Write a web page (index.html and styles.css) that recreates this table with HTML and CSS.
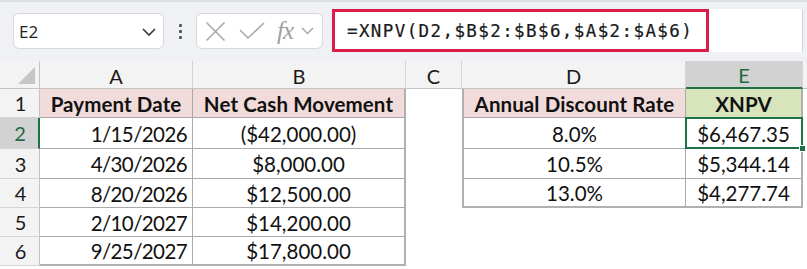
FILE: index.html
```html
<!DOCTYPE html>
<html>
<head>
<meta charset="utf-8">
<link rel="stylesheet" href="styles.css">
</head>
<body>
<div class="app">
  <div class="fbar">
    <div class="namebox">
      <span class="name">E2</span>
      <svg class="chev" width="14" height="8" viewBox="0 0 14 8"><polyline points="1,1 7,7 13,1" fill="none" stroke="#333" stroke-width="1.6"/></svg>
    </div>
    <div class="dots"><i></i><i></i><i></i></div>
    <div class="fxbox">
      <svg width="21" height="21" viewBox="0 0 21 21"><path d="M1.5 1.5 L19.5 19.5 M19.5 1.5 L1.5 19.5" stroke="#a8a8a8" stroke-width="1.6" fill="none"/></svg>
      <svg width="26" height="18" viewBox="0 0 26 18"><polyline points="1,8 9,16 25,1" stroke="#a8a8a8" stroke-width="1.6" fill="none"/></svg>
      <span class="fx">fx</span>
      <svg width="13" height="8" viewBox="0 0 13 8"><polyline points="1,1 6.5,6.5 12,1" fill="none" stroke="#a8a8a8" stroke-width="1.5"/></svg>
    </div>
    <div class="finput">
      <span class="ftext">=XNPV(D2,$B$2:$B$6,$A$2:$A$6)</span>
      <div class="hl"></div>
    </div>
  </div>
  <div class="grid">
    <div class="ch corner"><span class="tri"></span></div>
    <div class="ch">A</div>
    <div class="ch">B</div>
    <div class="ch">C</div>
    <div class="ch">D</div>
    <div class="ch sel">E</div>
    <div class="ch last"></div>

    <div class="rh">1</div>
    <div class="c t hd pink">Payment Date</div>
    <div class="c t hd pink tr">Net Cash Movement</div>
    <div class="c"></div>
    <div class="c t hd pink tl">Annual Discount Rate</div>
    <div class="c t hd green tr">XNPV</div>
    <div class="c"></div>

    <div class="rh rsel">2</div>
    <div class="c t r">1/15/2026</div>
    <div class="c t tr">($42,000.00)</div>
    <div class="c"></div>
    <div class="c t tl">8.0%</div>
    <div class="c t tr active">$6,467.35<span class="handle"></span></div>
    <div class="c"></div>

    <div class="rh">3</div>
    <div class="c t r">4/30/2026</div>
    <div class="c t tr">$8,000.00</div>
    <div class="c"></div>
    <div class="c t tl">10.5%</div>
    <div class="c t tr">$5,344.14</div>
    <div class="c"></div>

    <div class="rh">4</div>
    <div class="c t r">8/20/2026</div>
    <div class="c t tr">$12,500.00</div>
    <div class="c"></div>
    <div class="c t tl tb">13.0%</div>
    <div class="c t tr tb">$4,277.74</div>
    <div class="c"></div>

    <div class="rh">5</div>
    <div class="c t r">2/10/2027</div>
    <div class="c t tr">$14,200.00</div>
    <div class="c"></div>
    <div class="c"></div>
    <div class="c"></div>
    <div class="c"></div>

    <div class="rh">6</div>
    <div class="c t r tb">9/25/2027</div>
    <div class="c t tr tb">$17,800.00</div>
    <div class="c"></div>
    <div class="c"></div>
    <div class="c"></div>
    <div class="c"></div>
  </div>
</div>
</body>
</html>
```
FILE: styles.css
```css
* { box-sizing: border-box; }
html, body { margin: 0; padding: 0; background: #fff; }
body { width: 807px; height: 269px; overflow: hidden; font-family: "Lato", "Liberation Sans", sans-serif; color: #111; }

.fbar {
  height: 61px;
  background: #eff1f4;
  border-top: 2px solid #dcdee2;
  display: flex;
  align-items: flex-start;
}
.namebox {
  margin: 11px 0 0 13px;
  width: 151px; height: 36px;
  background: #fff;
  border: 1px solid #d6d8dc;
  border-radius: 6px;
  display: flex; align-items: center; justify-content: space-between;
  padding: 0 7px 0 5px;
}
.name { font-family: "Open Sans", "Liberation Sans", sans-serif; font-size: 17px; color: #222; }
.chev { margin-top: 2px; }
.dots { width: 32px; height: 36px; margin-top: 11px; display: flex; flex-direction: column; align-items: center; justify-content: center; gap: 3px; }
.dots i { display: block; width: 3px; height: 3px; background: #555; border-radius: 1px; }
.fxbox {
  margin-top: 11px;
  width: 127px; height: 36px;
  background: #fff;
  border: 1px solid #d6d8dc;
  border-radius: 6px;
  display: flex; align-items: center;
  padding: 0 0 0 8px;
  gap: 11px;
}
.fxbox svg:nth-child(2) { margin-left: 2px; }
.fx { font-family: "Liberation Serif", serif; font-style: italic; font-size: 25px; color: #a0a0a0; margin-left: 1px; letter-spacing: -1px; }
.fxbox svg:last-child { margin-left: -3px; }
.finput {
  margin: 7px 0 0 9px;
  width: 471px; height: 43px;
  background: #fff;
  border-right: 1px solid #cfd2d6;
  position: relative;
  display: flex; align-items: center;
}
.ftext { font-family: "DejaVu Sans Mono", monospace; font-size: 17.5px; letter-spacing: 1.4px; color: #1a1a1a; margin-left: 15px; margin-top: 1px; -webkit-text-stroke: 0.2px #1a1a1a; }
.hl { position: absolute; left: 0; top: 0; width: 377px; height: 43px; border: 3px solid #dc1c4a; }

.grid {
  display: grid;
  grid-template-columns: 40px 153px 213px 56px 224px 117px 4px;
  grid-template-rows: 28px 29px 31px 30px 29px 29px 29px;
}
.ch {
  background: #f3f3f3;
  border-right: 1px solid #d4d4d4;
  border-bottom: 1px solid #c4c4c4;
  display: flex; align-items: center; justify-content: center;
  font-size: 20px; color: #1a1a1a;
  padding-top: 2px;
}
.ch.last { border-right: none; }
.ch.sel { background: #d2d2d2; color: #1e6b41; border-bottom: 2px solid #1e7145; }
.corner { position: relative; border-right: 1px solid #c4c4c4; }
.tri { position: absolute; right: 4px; bottom: 4px; width: 0; height: 0; border-left: 17px solid transparent; border-bottom: 17px solid #c6c6c6; }
.rh {
  background: #f3f3f3;
  border-right: 1px solid #c4c4c4;
  border-bottom: 1px solid #d4d4d4;
  display: flex; align-items: center; justify-content: center;
  font-size: 20px; color: #1a1a1a;
  padding-left: 2px;
}
.rh.rsel { background: #d2d2d2; color: #1e6b41; border-right: 2px solid #1e7145; }
.c { background: #fff; font-size: 20.5px; display: flex; align-items: center; justify-content: center; padding-top: 1px; position: relative; }
.t { border-right: 1px solid #a9a9a9; border-bottom: 1px solid #a9a9a9; }
.t.tr { border-right: 2px solid #b0b0b0; }
.t.tb { border-bottom: 2px solid #b0b0b0; }
.t.tl { border-left: 2px solid #b0b0b0; }
.c.r { justify-content: flex-end; padding-right: 5px; letter-spacing: -0.6px; }
.hd { font-weight: 700; letter-spacing: 0.1px; }
.pink { background: #f2dcdb; }
.green { background: #d8e4bc; }
.active::after { content: ""; position: absolute; left: -1px; top: -1px; right: -2px; bottom: -1px; border: 2px solid #1e7145; }
.handle { position: absolute; right: -5px; bottom: -4px; width: 7px; height: 7px; background: #1e7145; border: 1px solid #fff; z-index: 2; }
```
